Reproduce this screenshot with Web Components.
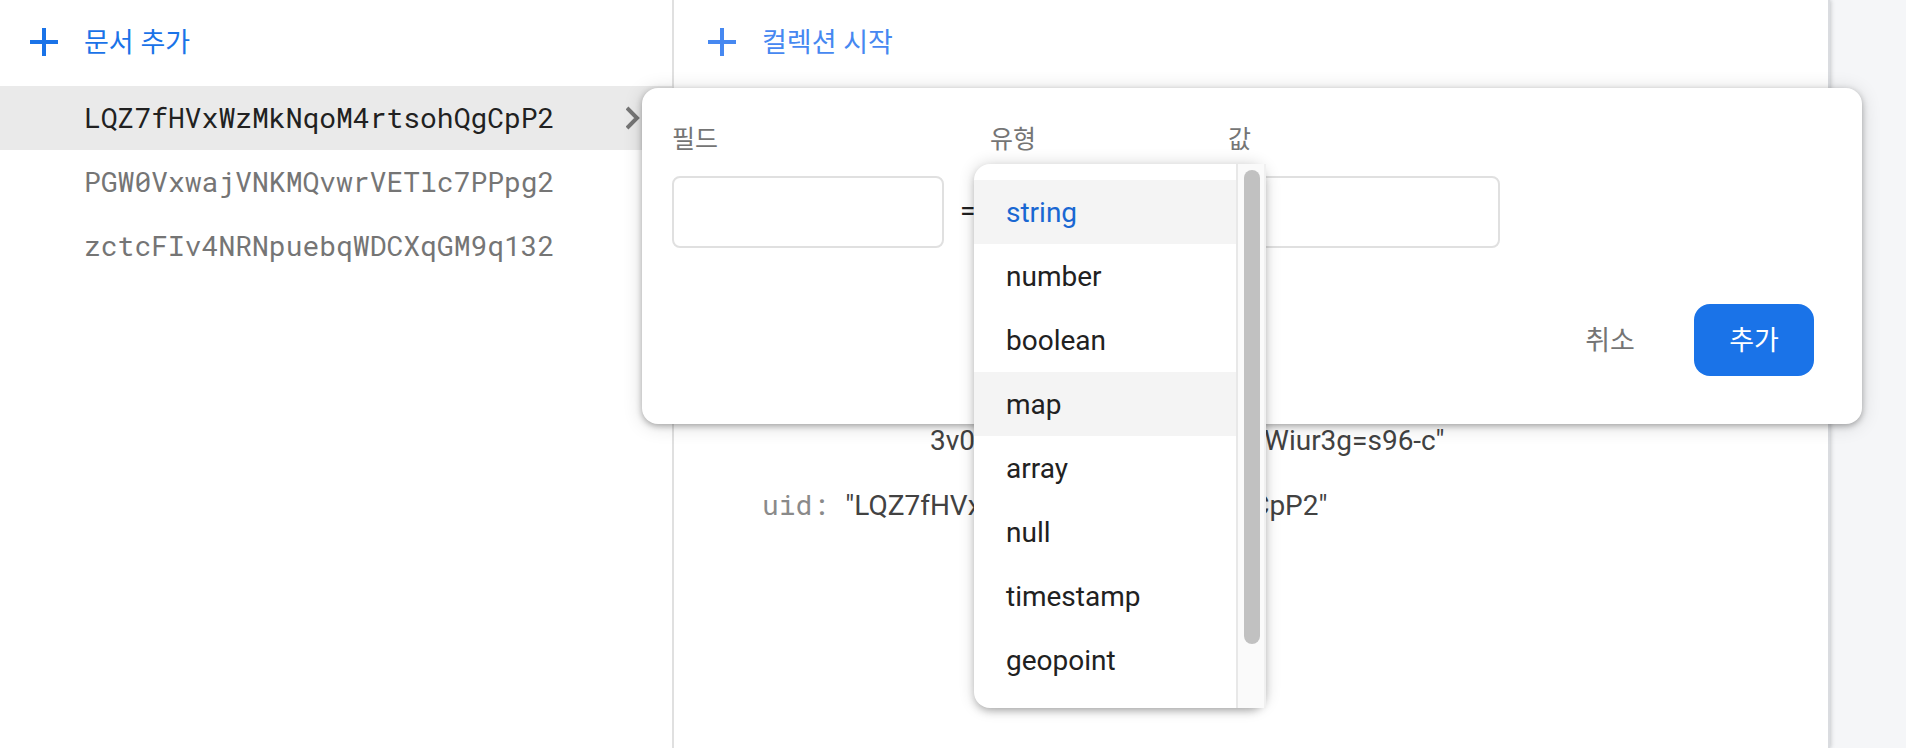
<!DOCTYPE html>
<html lang="ko">
<head>
<meta charset="utf-8">
<meta name="viewport" content="width=device-width, initial-scale=1">
<title>Firestore</title>
<style>
  body {
    margin: 0;
    background: #f5f6f8;
    color: #212121;
    font: 28px/32px Roboto, "Noto Sans CJK KR", sans-serif;
    --mono: "Roboto Mono", "Liberation Mono", monospace;
    --blue: #1a73e8;
    --muted: #757575;
    --line: #e0e0e0;
  }
</style>
</head>
<body>
<data-viewer></data-viewer>
<script>
const define = (name, html, setup) => {
  const template = document.createElement('template');
  template.innerHTML = html;
  customElements.define(name, class extends HTMLElement {
    constructor() {
      super();
      this.attachShadow({ mode: 'open' }).append(template.content.cloneNode(true));
    }
    connectedCallback() { if (setup) setup(this, this.shadowRoot); }
  });
};

define('add-action', `
<style>
  :host { display: block; }
  button { display: flex; align-items: center; gap: 26px; height: 86px; padding: 0 0 0 30px; border: 0; background: none; color: var(--blue); font: inherit; font-size: 27px; cursor: pointer; }
  svg { display: block; width: 28px; height: 28px; flex: none; margin-bottom: 2px; }
</style>
<button type="button"><svg viewBox="0 0 28 28" aria-hidden="true"><path d="M14 0v28M0 14h28" stroke="currentColor" stroke-width="4"/></svg><slot></slot></button>`);

define('document-row', `
<style>
  :host { display: block; }
  a { display: flex; align-items: center; height: 64px; padding: 0 30px 0 84px; color: var(--muted); font-family: var(--mono); text-decoration: none; }
  span { flex: 1; }
  svg { display: none; width: 16px; height: 24px; }
  :host([selected]) a { background: #eaeaea; color: #212121; }
  :host([selected]) svg { display: block; }
</style>
<a href="#"><span><slot></slot></span><svg viewBox="0 0 16 24" aria-hidden="true"><path d="M1 2l10 10L1 22" fill="none" stroke="#757575" stroke-width="4"/></svg></a>`);

define('type-option', `
<style>
  :host { display: block; height: 64px; line-height: 66px; padding: 0 32px; color: #212121; cursor: pointer; }
  :host([active]) { background: #f4f4f4; }
  :host([aria-selected="true"]) { background: #f4f4f4; color: #1967d2; }
</style>
<slot></slot>`, host => host.setAttribute('role', 'option'));

define('type-menu', `
<style>
  :host { display: flex; box-sizing: border-box; width: 292px; height: 544px; border-radius: 16px; background: #fff; box-shadow: 0 4px 8px -2px rgba(0,0,0,.3), 0 0 16px rgba(0,0,0,.16); }
  .list { flex: 1; padding: 16px 0; }
  .track { box-sizing: border-box; width: 30px; padding: 6px; border: solid #e8e8e8; border-width: 0 2px; border-right-color: #f0f0f0; background: #fafafa; }
  .thumb { width: 16px; height: 474px; border-radius: 8px; background: #c1c1c1; }
</style>
<div class="list" role="listbox" aria-label="유형"><slot></slot></div>
<div class="track"><div class="thumb"></div></div>`);

define('field-editor', `
<style>
  :host { display: block; box-sizing: border-box; padding: 36px 48px 48px 30px; border-radius: 16px; background: #fff; box-shadow: 0 2px 6px rgba(0,0,0,.3), 0 2px 20px rgba(0,0,0,.14); }
  .fields { display: grid; grid-template-columns: 272px 46px 206px 32px 272px; row-gap: 20px; }
  label { color: var(--muted); font-size: 25px; }
  .l2 { grid-column: 3; }
  .l3 { grid-column: 5; }
  input, .type { display: block; box-sizing: border-box; width: 100%; height: 72px; padding: 0 16px; border: 2px solid var(--line); border-radius: 8px; background: #fff; color: inherit; font: inherit; outline: 0; }
  .eq { line-height: 70px; padding-left: 16px; }
  .type-cell { position: relative; }
  type-menu { position: absolute; left: -16px; top: -12px; }
  .value { grid-column: 5; }
  .actions { display: flex; justify-content: flex-end; gap: 24px; margin-top: 56px; }
  .actions button { width: 120px; height: 72px; padding: 2px 0 0; border: 0; border-radius: 16px; background: none; color: var(--muted); font: inherit; font-size: 27px; cursor: pointer; }
  .actions .primary { background: var(--blue); color: #fff; }
</style>
<form>
  <div class="fields">
    <label for="name">필드</label><label class="l2" for="type">유형</label><label class="l3" for="value">값</label>
    <input id="name" type="text">
    <span class="eq">=</span>
    <div class="type-cell">
      <button class="type" id="type" type="button" aria-haspopup="listbox" aria-expanded="true"></button>
      <type-menu>
        <type-option aria-selected="true">string</type-option>
        <type-option>number</type-option>
        <type-option>boolean</type-option>
        <type-option active>map</type-option>
        <type-option>array</type-option>
        <type-option>null</type-option>
        <type-option>timestamp</type-option>
        <type-option>geopoint</type-option>
      </type-menu>
    </div>
    <input class="value" id="value" type="text">
  </div>
  <div class="actions"><button type="button">취소</button><button class="primary" type="button">추가</button></div>
</form>`);

define('field-values', `
<style>
  :host { display: block; padding: 339px 0 0 88px; color: #424242; }
  .row { display: flex; align-items: baseline; gap: 16px; height: 32px; margin-bottom: 32px; }
  .key { color: #8a8a8a; font-family: var(--mono); }
  .wrapped { gap: 289px; padding-left: 168px; }
</style>
<div class="row wrapped"><span>3v0</span><span>Wiur3g=s96-c"</span></div>
<div class="row"><span class="key">uid:</span><span>"LQZ7fHVxWzMkNqoM4rtsohQgCpP2"</span></div>`);

define('data-viewer', `
<style>
  :host { display: grid; grid-template-columns: 672px 1fr; position: relative; min-height: 100vh; margin-right: 76px; background: #fff; border-right: 2px solid #dadce0; box-shadow: 1px 0 4px rgba(60,64,67,.25); box-sizing: border-box; }
  .detail { border-left: 2px solid var(--line); }
  .detail add-action { padding-left: 4px; --blue: #4688f1; }
  field-editor { position: absolute; left: 642px; right: -34px; top: 88px; }
</style>
<nav>
  <add-action>문서 추가</add-action>
  <document-row selected>LQZ7fHVxWzMkNqoM4rtsohQgCpP2</document-row>
  <document-row>PGW0VxwajVNKMQvwrVETlc7PPpg2</document-row>
  <document-row>zctcFIv4NRNpuebqWDCXqGM9q132</document-row>
</nav>
<section class="detail">
  <add-action>컬렉션 시작</add-action>
  <field-values></field-values>
</section>
<field-editor></field-editor>`);
</script>
</body>
</html>
